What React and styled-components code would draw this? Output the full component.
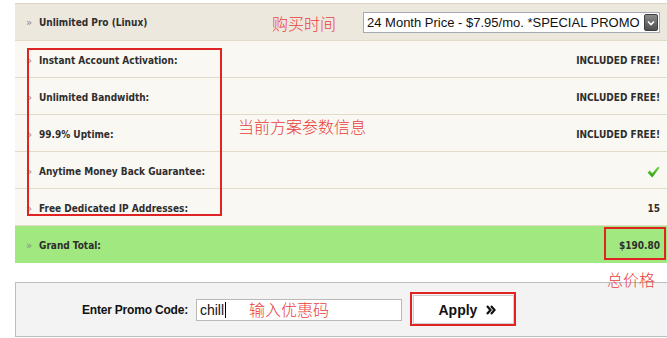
import React from "react"
import styled, { createGlobalStyle } from "styled-components"

const GlobalStyle = createGlobalStyle`
  html, body {
    margin: 0;
    padding: 0;
    background: #ffffff;
    overflow: hidden;
  }
  body {
    font-family: "Liberation Sans", Arial, sans-serif;
  }
`

const Page = styled.div`
  position: relative;
  width: 667px;
  height: 338px;
  padding-top: 3px;
  box-sizing: border-box;
`

const Table = styled.div`
  margin-left: 15px;
  width: 652px;
`

const Row = styled.div`
  display: flex;
  align-items: center;
  justify-content: space-between;
  height: 36px;
  padding: 0 7px 0 11px;
  background: ${(p) => (p.$tone === "head" ? "#ede8de" : p.$tone === "total" ? "#a1e880" : "#faf8f2")};
  border-top: ${(p) => (p.$tone === "head" ? "1px solid #ddd5c4" : "none")};
  border-bottom: ${(p) => (p.$tone === "total" ? "1px solid #a1e880" : "1px solid #e2dbca")};
`

const Label = styled.div`
  display: flex;
  align-items: center;
  gap: 8px;
  font-family: "DejaVu Sans Condensed", "DejaVu Sans", sans-serif;
  font-weight: bold;
  font-size: 10px;
  color: #2e2e2e;
  padding-top: ${(p) => (p.$low ? "3px" : "0")};
`

const Bullet = styled.span`
  font-family: "DejaVu Sans", sans-serif;
  font-weight: normal;
  font-size: 10px;
  color: #8a8a8a;
  width: 5px;
`

const Value = styled.div`
  font-family: "DejaVu Sans Condensed", "DejaVu Sans", sans-serif;
  font-weight: bold;
  font-size: 10px;
  color: #2e2e2e;
  padding-top: 3px;
  display: flex;
  align-items: center;
`

const SelectBox = styled.div`
  display: flex;
  align-items: center;
  justify-content: space-between;
  box-sizing: border-box;
  flex-shrink: 0;
  width: 297px;
  height: 21px;
  border: 1px solid #a4abb4;
  background: #ffffff;
  padding: 0 1px 0 3px;
  margin-top: 1px;
  font-family: "Liberation Sans", Arial, sans-serif;
  font-size: 13px;
  color: #111;
  white-space: nowrap;
`

const SelectText = styled.span`
  flex: 1;
`

const ArrowButton = styled.span`
  flex-shrink: 0;
  width: 14px;
  height: 17px;
  border-radius: 2px;
  background: linear-gradient(#8a8a8a, #4e4e4e);
  border: 1px solid #3e3e3e;
  box-sizing: border-box;
  display: flex;
  align-items: center;
  justify-content: center;
`

const PromoBox = styled.div`
  margin: 19px 0 0 15px;
  width: 586px;
  height: 53px;
  box-sizing: content-box;
  background: #f3f3f3;
  border: 1px solid #bdbdbd;
  border-right: none;
  display: flex;
  align-items: center;
  padding-left: 66px;
`

const PromoLabel = styled.span`
  font-family: "Liberation Sans", Arial, sans-serif;
  font-weight: bold;
  font-size: 12px;
  color: #111;
  margin-right: 8px;
  letter-spacing: -0.2px;
`

const Input = styled.div`
  width: 201px;
  height: 20px;
  border: 1px solid #b9b9b9;
  background: #fff;
  display: flex;
  align-items: center;
  padding-left: 3px;
  font-family: "Liberation Sans", Arial, sans-serif;
  font-size: 14px;
  color: #111;
  margin-top: 1px;
`

const Caret = styled.span`
  display: inline-block;
  width: 1px;
  height: 16px;
  background: #000;
  margin-left: 1px;
`

const ApplyButton = styled.button`
  margin-left: 11px;
  width: 101px;
  height: 29px;
  border: 1px solid #d0d0d0;
  background: #ffffff;
  font-family: "Liberation Sans", Arial, sans-serif;
  font-weight: bold;
  font-size: 14px;
  color: #111;
  display: flex;
  align-items: center;
  justify-content: center;
  gap: 9px;
  padding: 0 0 0 8px;
`

const Frame = styled.div`
  position: absolute;
  left: ${(p) => p.$x}px;
  top: ${(p) => p.$y}px;
  width: ${(p) => p.$w}px;
  height: ${(p) => p.$h}px;
  border: 2px solid #e02424;
  box-sizing: border-box;
  pointer-events: none;
`

const Note = styled.span`
  position: absolute;
  left: ${(p) => p.$x}px;
  top: ${(p) => p.$y}px;
  font-family: "Noto Sans CJK SC", sans-serif;
  font-weight: 300;
  font-size: 16px;
  line-height: 20px;
  color: #e8403c;
  white-space: nowrap;
`

const Check = () => (
  <svg width="13" height="12" viewBox="0 0 13 12">
    <defs>
      <linearGradient id="g" x1="0" y1="0" x2="0" y2="1">
        <stop offset="0" stopColor="#7ad94a" />
        <stop offset="1" stopColor="#2f9a12" />
      </linearGradient>
    </defs>
    <path d="M0.5 6.5 L3 4.5 L5.2 7.2 L11 0.5 L12.6 1.8 L5.3 11.5 Z" fill="url(#g)" />
  </svg>
)

const DoubleChevron = () => (
  <svg width="10" height="10" viewBox="0 0 10 10">
    <path d="M1 1 L4.5 5 L1 9 M5 1 L8.5 5 L5 9" stroke="#111" strokeWidth="2.2" fill="none" />
  </svg>
)

const features = [
  { name: "Instant Account Activation:", value: "INCLUDED FREE!" },
  { name: "Unlimited Bandwidth:", value: "INCLUDED FREE!" },
  { name: "99.9% Uptime:", value: "INCLUDED FREE!" },
  { name: "Anytime Money Back Guarantee:", value: "check" },
  { name: "Free Dedicated IP Addresses:", value: "15" },
]

export default function App() {
  return (
    <Page>
      <GlobalStyle />
      <Table>
        <Row $tone="head">
          <Label>
            <Bullet>»</Bullet>
            Unlimited Pro (Linux)
          </Label>
          <SelectBox>
            <SelectText>24 Month Price - $7.95/mo. *SPECIAL PROMO</SelectText>
            <ArrowButton>
              <svg width="8" height="6" viewBox="0 0 8 6">
                <path d="M1 1.5 L4 4.5 L7 1.5" stroke="#fff" strokeWidth="1.6" fill="none" />
              </svg>
            </ArrowButton>
          </SelectBox>
        </Row>
        {features.map((f) => (
          <Row key={f.name}>
            <Label $low>
              <Bullet>»</Bullet>
              {f.name}
            </Label>
            <Value>{f.value === "check" ? <Check /> : f.value}</Value>
          </Row>
        ))}
        <Row $tone="total">
          <Label $low>
            <Bullet>»</Bullet>
            Grand Total:
          </Label>
          <Value>$190.80</Value>
        </Row>
      </Table>
      <PromoBox>
        <PromoLabel>Enter Promo Code:</PromoLabel>
        <Input>
          chill
          <Caret />
        </Input>
        <ApplyButton>
          Apply <DoubleChevron />
        </ApplyButton>
      </PromoBox>

      <Frame $x={27} $y={48} $w={195} $h={168} />
      <Frame $x={604} $y={227} $w={62} $h={33} />
      <Frame $x={410} $y={292} $w={106} $h={34} />
      <Note $x={272} $y={13}>购买时间</Note>
      <Note $x={238} $y={116}>当前方案参数信息</Note>
      <Note $x={607} $y={269}>总价格</Note>
      <Note $x={249} $y={299}>输入优惠码</Note>
    </Page>
  )
}
